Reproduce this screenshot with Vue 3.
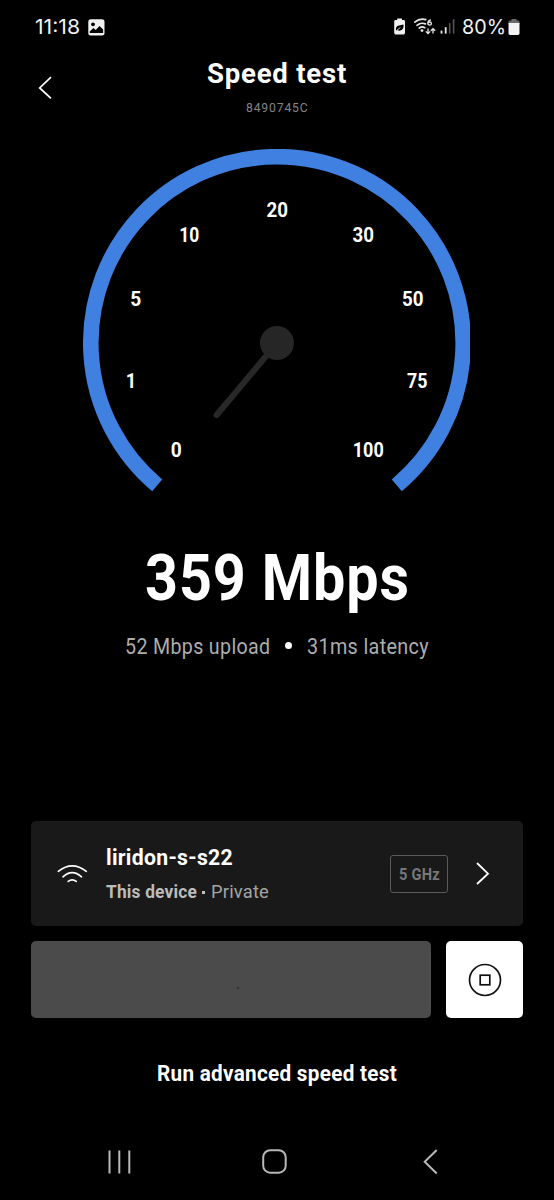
<script setup>
import { h } from 'vue'

// Single line of text drawn at a fixed advance width
const FitText = (props) =>
  h('svg', { width: props.width, height: props.height }, [
    h('text', {
      x: 0,
      y: props.baseline,
      textLength: props.width,
      lengthAdjust: 'spacingAndGlyphs',
    }, props.text),
  ])
FitText.props = ['text', 'width', 'height', 'baseline']

const ticks = [
  { label: '0', x: 176.3, y: 457, width: 11 },
  { label: '1', x: 131, y: 388, width: 10.5 },
  { label: '5', x: 135.8, y: 306.5, width: 11 },
  { label: '10', x: 189.3, y: 241.8, width: 20 },
  { label: '20', x: 277.2, y: 217.3, width: 21.5 },
  { label: '30', x: 363.2, y: 241.8, width: 21.5 },
  { label: '50', x: 412.8, y: 306.5, width: 21.5 },
  { label: '75', x: 417.2, y: 388, width: 20.5 },
  { label: '100', x: 368.3, y: 457, width: 31 },
]
</script>

<template>
  <div class="screen">
    <div class="status-bar">
      <FitText class="clock" text="11:18" :width="45" :height="20" :baseline="17" />
      <svg class="picture-icon" width="17" height="17" viewBox="0 0 17 17">
        <rect x="0.3" y="0.3" width="16.2" height="16.2" rx="2.5" fill="#f0f0f0" />
        <circle cx="5" cy="5.3" r="1.9" fill="#000" />
        <path d="M1.8 14V12.6L5.4 9l2.3 2 3.8-4 3.6 3.6V14z" fill="#000" />
      </svg>
      <div class="spacer" />
      <svg width="66" height="18" viewBox="393 17.4 66 18">
        <path d="M397.2 18.8h4.8v1.6h1.6q1.4 0 1.4 1.4v11.4q0 1.6-1.6 1.6h-7.6q-1.6 0-1.6-1.6V21.8q0-1.4 1.4-1.4h1.6z" fill="#f0f0f0" />
        <path d="M396 31.2q-.6-4.6 3-5.2l4.6-1q.2 5.4-3.4 6-1.8.3-2.6-.7z" fill="#000" />
        <path d="m396.4 31 4-3" stroke="#f0f0f0" stroke-width=".8" />
        <g fill="none" stroke="#e8e8e8" stroke-width="1.7" stroke-linecap="round">
          <path d="M414.8 22.6q5-4.4 11-2.6" />
          <path d="M417 25.7q4-3.2 8.4-1.4" />
          <path d="M419.3 28.4q2.8-2 5.4-.3" />
        </g>
        <circle cx="422" cy="31" r="1.4" fill="#e8e8e8" />
        <path d="M431 20.2q-3.2.4-3.2 3.3 0 2.1 1.9 2.1 1.7 0 1.7-1.7 0-1.5-1.7-1.5-1.2 0-1.7 1" fill="none" stroke="#e8e8e8" stroke-width="1.3" />
        <path d="M428 29v5m-2.2-2.2L428 34l2.2-2.2M433 34v-5m-2.2 2.2L433 29l2.2 2.2" fill="none" stroke="#e8e8e8" stroke-width="1.3" />
        <g fill="#e8e8e8">
          <rect x="440.6" y="31" width="1.8" height="3" />
          <rect x="444.8" y="27.6" width="1.8" height="6.4" />
          <rect x="448.9" y="23.5" width="1.6" height="10.5" fill="#555" />
          <rect x="452.8" y="19.5" width="1.6" height="14.5" fill="#555" />
        </g>
      </svg>
      <FitText class="charge" text="80%" :width="44" :height="20" :baseline="17" />
      <svg class="battery" width="12" height="18" viewBox="0 0 12 18">
        <path d="M3.5 1h5v1.5h1.8Q11.5 2.5 11.5 4v2H.5V4q0-1.5 1.2-1.5h1.8z" fill="#6a6a6a" />
        <path d="M.5 5h11v10.2q0 1.8-1.8 1.8H2.3Q.5 17 .5 15.2z" fill="#f4f4f4" />
      </svg>
    </div>

    <header class="header">
      <svg class="back" width="14" height="24" viewBox="0 0 14 24">
        <path d="M13 1.2 1.7 11.9 13 22.4" />
      </svg>
      <div class="heading">
        <FitText class="title" text="Speed test" :width="140" :height="36" :baseline="29" />
        <FitText class="serial" text="8490745C" :width="62.5" :height="22" :baseline="22" />
      </div>
    </header>

    <svg class="gauge" width="386.4" height="344" viewBox="83 149 386.4 344">
      <path class="arc" d="M157.2 485.4A186.2 186.2 0 1 1 396.8 485.4" />
      <path class="needle" d="M277 343 216.7 415" />
      <circle class="hub" cx="277" cy="343" r="17" />
      <text
        v-for="tick in ticks"
        :key="tick.label"
        :x="tick.x - tick.width / 2"
        :y="tick.y"
        :textLength="tick.width"
        lengthAdjust="spacingAndGlyphs"
      >{{ tick.label }}</text>
    </svg>

    <FitText class="download" text="359 Mbps" :width="265" :height="80" :baseline="61" />

    <div class="details">
      <FitText text="52 Mbps upload" :width="145.5" :height="30" :baseline="21.5" />
      <span class="bullet" />
      <FitText text="31ms latency" :width="122" :height="30" :baseline="21.5" />
    </div>

    <section class="device">
      <svg class="wifi" width="30" height="20" viewBox="57 864 30 20">
        <path d="M58.3 871.3q13.9-11 28 0M63 876.8q9.2-8.4 18.5 0M68.2 881.4q4-3 8 0" />
      </svg>
      <div class="device-text">
        <FitText class="name" text="liridon-s-s22" :width="127" :height="28" :baseline="22.3" />
        <div class="meta">
          <FitText class="own" text="This device" :width="91" :height="24" :baseline="18" />
          <span class="dot" />
          <FitText class="network" text="Private" :width="58" :height="24" :baseline="18" />
        </div>
      </div>
      <div class="band">
        <FitText text="5 GHz" :width="41" :height="20" :baseline="16" />
      </div>
      <svg class="chevron" width="13" height="23" viewBox="0 0 13 23">
        <path d="M1 1 12 11.7 1 22" />
      </svg>
    </section>

    <div class="actions">
      <div class="progress"><span /></div>
      <button class="stop">
        <svg width="34" height="34" viewBox="0 0 34 34">
          <circle cx="17" cy="17" r="15.5" />
          <rect x="12.2" y="12.2" width="9.6" height="9.6" />
        </svg>
      </button>
    </div>

    <FitText class="advanced" text="Run advanced speed test" :width="240" :height="30" :baseline="21" />

    <nav class="nav">
      <svg width="24" height="26" viewBox="0 0 24 26">
        <path d="M2.5 1.5v23M12.3 1.5v23M22.3 1.5v23" />
      </svg>
      <svg width="26" height="26" viewBox="2.3 0.3 26 26">
        <rect x="1.5" y="1.5" width="22.5" height="22.5" rx="7" />
      </svg>
      <svg width="15" height="26" viewBox="0 0.5 15 26">
        <path d="M13.7 1.5 1.7 13.2 13.7 25" />
      </svg>
    </nav>
  </div>
</template>

<style>
body {
  background: #000;
}
</style>

<style scoped>
.screen {
  width: 554px;
  height: 1200px;
  display: flex;
  flex-direction: column;
  align-items: center;
  overflow: hidden;
  background: #000;
  color: #fff;
  fill: currentColor;
  font-family: Roboto, "Liberation Sans", sans-serif;
}

svg {
  display: block;
  flex: none;
  overflow: visible;
}

.status-bar {
  box-sizing: border-box;
  width: 100%;
  height: 54px;
  padding: 17px 34px 0 35px;
  display: flex;
  align-items: flex-start;
}

.clock,
.charge {
  font-family: Inter, Roboto, sans-serif;
  font-size: 20px;
  color: #f2f2f2;
}

.clock {
  margin-right: 8px;
}

.picture-icon {
  margin-top: 1.5px;
}

.spacer {
  flex: 1;
}

.charge {
  margin-left: 3px;
}

.battery {
  margin: 0.5px 0 0 2px;
}

.header {
  width: 100%;
  height: 95px;
  display: flex;
  align-items: flex-start;
}

.back {
  margin: 22px 0 0 38px;
  fill: none;
  stroke: #fff;
  stroke-width: 1.7;
}

.heading {
  width: 450px;
  display: flex;
  flex-direction: column;
  align-items: center;
}

.title {
  font-size: 28.5px;
  font-weight: 700;
  letter-spacing: 0.8px;
}

.serial {
  font-size: 12.8px;
  letter-spacing: 0.9px;
  color: #858585;
}

.gauge {
  overflow: hidden;
  margin-right: 1px;
  font-size: 20px;
  font-weight: 700;
}

.arc {
  fill: none;
  stroke: #3f80e0;
  stroke-width: 15.6;
}

.needle {
  stroke: #282828;
  stroke-width: 6;
  stroke-linecap: round;
}

.hub {
  fill: #262626;
}

.download {
  margin-top: 46px;
  font-size: 64px;
  font-weight: 700;
  letter-spacing: 1px;
}

.details {
  margin-top: 13px;
  display: flex;
  align-items: center;
  font-size: 22.5px;
  font-weight: 400;
  letter-spacing: 0.4px;
  color: #adadad;
}

.bullet {
  width: 7px;
  height: 7px;
  margin: 0 15px 3px;
  border-radius: 50%;
  background: #fff;
}

.device {
  box-sizing: border-box;
  width: 492px;
  height: 105px;
  margin-top: 159px;
  padding: 0 34px 0 26px;
  display: flex;
  align-items: center;
  border-radius: 5px;
  background: #191919;
}

.wifi {
  fill: none;
  stroke: #fff;
  stroke-width: 1.7;
  stroke-linecap: round;
}

.device-text {
  margin-left: 19px;
  flex: 1;
}

.name {
  font-size: 22px;
  font-weight: 700;
  letter-spacing: 0.3px;
}

.meta {
  margin-top: 9px;
  display: flex;
  align-items: center;
  font-size: 18.8px;
  letter-spacing: 0.2px;
}

.own {
  font-weight: 700;
  color: #bcbcbc;
}

.dot {
  width: 3px;
  height: 3px;
  margin: 0 6px 0 5px;
  background: #c0c0c0;
}

.network {
  font-weight: 400;
  color: #a4a4a4;
}

.band {
  box-sizing: border-box;
  width: 58px;
  height: 38px;
  margin-right: 28px;
  display: flex;
  align-items: center;
  justify-content: center;
  border: 1.5px solid #5a5a5a;
  border-radius: 3px;
  font-size: 16.5px;
  font-weight: 700;
  letter-spacing: 0.3px;
  color: #777;
}

.chevron {
  fill: none;
  stroke: #fff;
  stroke-width: 1.8;
}

.actions {
  width: 492px;
  height: 77px;
  margin-top: 15.4px;
  display: flex;
  gap: 15px;
}

.progress {
  flex: 1;
  display: flex;
  align-items: center;
  justify-content: center;
  border-radius: 5px;
  background: #4b4b4b;
}

.progress span {
  width: 2px;
  height: 2px;
  margin: 17px 0 0 14px;
  border-radius: 50%;
  background: #2c2c2c;
}

.stop {
  width: 77px;
  padding: 0;
  display: flex;
  align-items: center;
  justify-content: center;
  border: 0;
  border-radius: 5px;
  background: #fff;
}

.stop svg {
  fill: none;
  stroke: #111;
  stroke-width: 1.7;
}

.advanced {
  margin-top: 41.6px;
  font-size: 21.5px;
  font-weight: 700;
  letter-spacing: 0.3px;
}

.nav {
  box-sizing: border-box;
  width: 100%;
  margin-top: 59px;
  padding: 0 116px 0 107px;
  display: flex;
  justify-content: space-between;
  fill: none;
  stroke: #b8b8b8;
  stroke-width: 2;
}
</style>
